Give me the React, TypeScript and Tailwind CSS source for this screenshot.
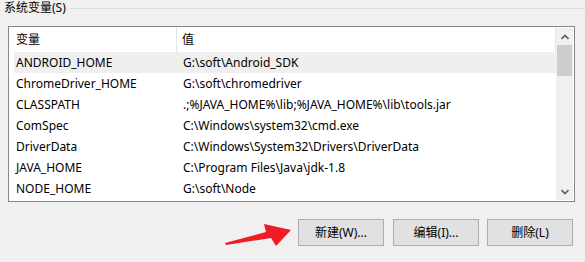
import React from 'react';

const rows = [
  ['ANDROID_HOME', 'G:\\soft\\Android_SDK'],
  ['ChromeDriver_HOME', 'G:\\soft\\chromedriver'],
  ['CLASSPATH', '.;%JAVA_HOME%\\lib;%JAVA_HOME%\\lib\\tools.jar'],
  ['ComSpec', 'C:\\Windows\\system32\\cmd.exe'],
  ['DriverData', 'C:\\Windows\\System32\\Drivers\\DriverData'],
  ['JAVA_HOME', 'C:\\Program Files\\Java\\jdk-1.8'],
  ['NODE_HOME', 'G:\\soft\\Node'],
];

const Btn = ({ label, extra = '' }: { label: string; extra?: string }) => (
  <button className={`w-[86px] h-[27px] bg-[#e1e1e1] border border-[#adadad] text-[12px] text-black leading-none ${extra}`}>
    {label}
  </button>
);

export default function App() {
  return (
    <div
      className="w-[585px] h-[262px] bg-[#f0f0f0] overflow-hidden text-[12px] text-black relative"
      style={{ fontFamily: '"Noto Sans", "Noto Sans CJK SC", sans-serif' }}
    >
      {/* group title */}
      <div className="flex items-center h-[16px] pl-[4px]">
        <span className="leading-none pr-[4px]">系统变量(S)</span>
        <div className="flex-1 h-px bg-[#dcdcdc] mt-[1px]" />
      </div>

      {/* list */}
      <div className="ml-[8px] mt-[10px] w-[567px] h-[176px] border border-[#828790] bg-white flex">
        <div className="flex-1 flex flex-col">
          <div className="h-[25px] flex items-center border-r border-[#e5e5e5] w-[547px]">
            <div className="w-[168px] pl-[7px] h-full flex items-center border-r border-[#e5e5e5]">变量</div>
            <div className="pl-[5px]">值</div>
          </div>
          {rows.map(([k, v], i) => (
            <div
              key={k}
              className={`ml-[5px] h-[21px] flex items-center ${i === 0 ? 'bg-[#efefef]' : ''}`}
            >
              <div className="w-[169px] pl-[2px] whitespace-nowrap">{k}</div>
              <div className="whitespace-nowrap">{v}</div>
            </div>
          ))}
        </div>
        {/* scrollbar */}
        <div className="w-[17px] bg-[#f0f0f0] flex flex-col mr-[1px] mt-[1px] mb-[1px]">
          <div className="h-[17px] flex items-center justify-center">
            <svg width="8" height="6" viewBox="0 0 8 6">
              <path d="M0.5 5 L4 1.5 L7.5 5" stroke="#606060" strokeWidth="1.6" fill="none" />
            </svg>
          </div>
          <div className="h-[31px] bg-[#cdcdcd] mx-[1px]" />
          <div className="flex-1" />
          <div className="h-[17px] flex items-center justify-center">
            <svg width="8" height="6" viewBox="0 0 8 6">
              <path d="M0.5 1 L4 4.5 L7.5 1" stroke="#606060" strokeWidth="1.6" fill="none" />
            </svg>
          </div>
        </div>
      </div>

      {/* buttons */}
      <div className="flex justify-end gap-[8px] pr-[12px] mt-[17px]">
        <Btn label="新建(W)..." extra="mr-[1px]" />
        <Btn label="编辑(I)..." />
        <Btn label="删除(L)" />
      </div>

      {/* red arrow annotation */}
      <svg className="absolute left-[220px] top-[220px]" width="75" height="30" viewBox="0 0 75 30">
        <path d="M5 23 L46 12 L44 4 L71 10 L56 26 L51 18 L6 25 Z" fill="#ee1c25" />
      </svg>
    </div>
  );
}
